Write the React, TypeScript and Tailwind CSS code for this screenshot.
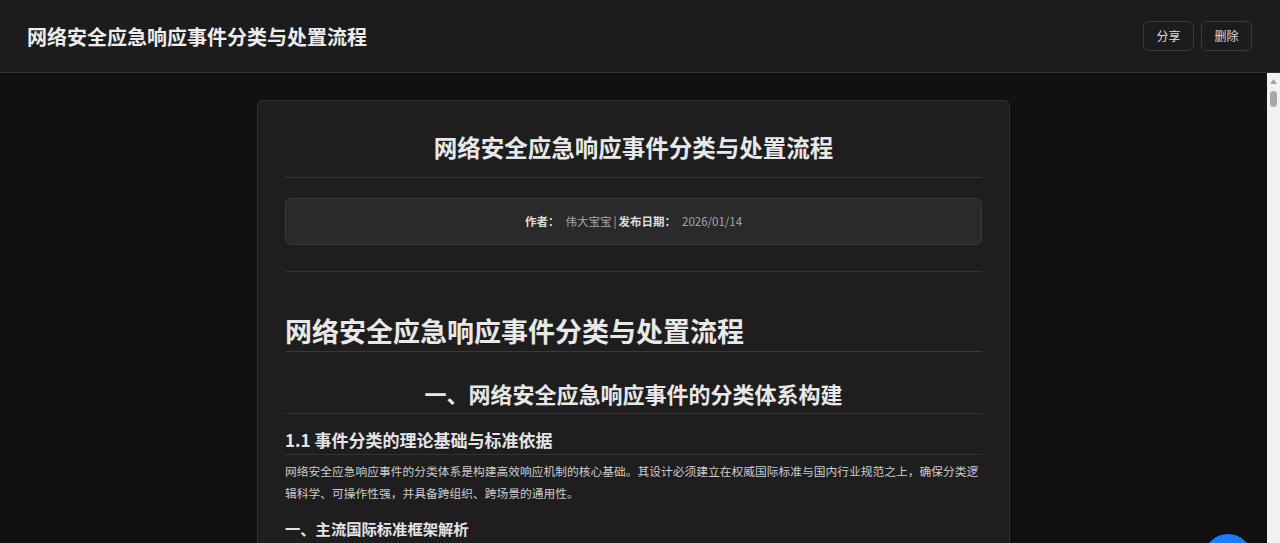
export default function App() {
  const font = { fontFamily: '"Microsoft YaHei", "Noto Sans CJK SC", "Noto Sans", sans-serif' };

  return (
    <div style={font} className="relative flex h-[543px] w-[1280px] flex-col overflow-hidden bg-[#111111] text-[#e6e6e6]">
      {/* Top bar */}
      <header className="flex h-[73px] shrink-0 items-center justify-between border-b border-[#333333] bg-[#1c1c1c] pl-[27px] pr-[28px]">
        <h1 className="pt-px text-[20px] font-bold text-[#ececec]">网络安全应急响应事件分类与处置流程</h1>
        <div className="flex gap-[7px]">
          <button className="h-[30px] w-[51px] rounded-md border border-[#3a3a3a] bg-[#1c1c1c] text-[12px] text-[#dddddd]">分享</button>
          <button className="h-[30px] w-[51px] rounded-md border border-[#3a3a3a] bg-[#1c1c1c] text-[12px] text-[#dddddd]">删除</button>
        </div>
      </header>

      <div className="flex min-h-0 flex-1">
        <main className="min-w-0 flex-1 overflow-hidden pt-[27px]">
          <article className="mx-auto w-[753px] rounded-md border border-[#303030] bg-[#1e1e1e] px-[27px] pt-[26px] pb-16">
            <h2 className="border-b border-[#383838] pb-[10px] text-center text-[23.5px] font-bold leading-[40px] text-[#e8e8e8]">
              网络安全应急响应事件分类与处置流程
            </h2>

            <div className="mt-5 flex h-[47px] items-center justify-center rounded-md border border-[#3a3a3a] bg-[#2a2a2a] text-[11.5px]">
              <span className="font-bold text-[#dddddd]">作者：</span>
              <span className="ml-[6px] text-[#a8a8a8]">伟大宝宝</span>
              <span className="mx-[2px] text-[#a8a8a8]">|</span>
              <span className="font-bold text-[#dddddd]">发布日期：</span>
              <span className="ml-[6px] text-[#a8a8a8]">2026/01/14</span>
            </div>

            <hr className="mt-[26px] border-[#333333]" />

            <h1 className="mt-[40px] border-b border-[#3a3a3a] pb-[2px] text-[27px] font-bold leading-[37px] text-[#e8e8e8]">
              网络安全应急响应事件分类与处置流程
            </h1>

            <h2 className="mt-[26px] border-b border-[#333333] pb-[5px] text-center text-[22px] font-bold leading-[30px] text-[#e8e8e8]">
              一、网络安全应急响应事件的分类体系构建
            </h2>

            <h3 className="mt-[13px] border-b border-[#333333] pb-px text-[17px] font-bold leading-[26px] text-[#e4e4e4]">
              1.1 事件分类的理论基础与标准依据
            </h3>

            <p className="mt-[5px] text-[11.75px] leading-[22px] text-[#cccccc]">
              <span className="block whitespace-nowrap">网络安全应急响应事件的分类体系是构建高效响应机制的核心基础。其设计必须建立在权威国际标准与国内行业规范之上，确保分类逻</span>
              <span className="block">辑科学、可操作性强，并具备跨组织、跨场景的通用性。</span>
            </p>

            <h4 className="mt-3 text-[15.3px] font-bold leading-6 text-[#e4e4e4]">一、主流国际标准框架解析</h4>
          </article>
        </main>

        {/* Scrollbar */}
        <div className="flex w-[13px] shrink-0 flex-col items-center bg-[#f1f1f1] pt-[5px]">
          <svg width="7" height="5" viewBox="0 0 7 5" className="mt-[1px]">
            <path d="M3.5 0 L7 5 L0 5 Z" fill="#a3a3a3" />
          </svg>
          <div className="mt-[7px] h-[16px] w-[7px] rounded-full bg-[#a8a8a8]" />
        </div>
      </div>

      {/* Floating button */}
      <div className="absolute left-[1204px] top-[534px] h-12 w-12 rounded-full bg-[#1a7dff] shadow-lg" />
    </div>
  );
}
